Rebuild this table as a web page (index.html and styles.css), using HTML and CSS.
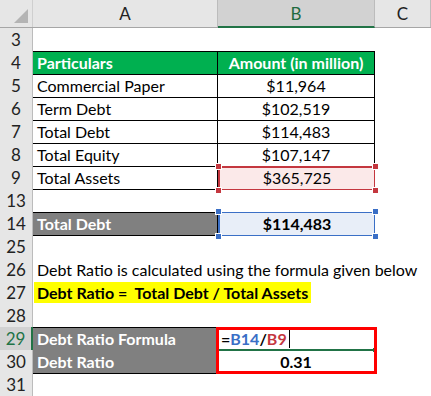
FILE: index.html
```html
<!DOCTYPE html>
<html lang="en">
  <head>
    <meta charset="UTF-8" />
    <title>Debt Ratio</title>
    <link rel="stylesheet" href="styles.css">
  </head>
  <body>
    <div class="sheet">
      <!-- column headers -->
      <div class="row head-row">
        <div class="corner"><span class="corner-tri"></span></div>
        <div class="col-head">A</div>
        <div class="col-head col-active">B</div>
        <div class="col-head">C</div>
      </div>

      <div class="row">
        <div class="num">3</div><div class="cell"></div><div class="cell"></div><div class="cell"></div>
      </div>
      <div class="row tbl tbl-top">
        <div class="num">4</div>
        <div class="cell a green">Particulars</div>
        <div class="cell b green center">Amount (in million)</div>
        <div class="cell c"></div>
      </div>
      <div class="row tbl">
        <div class="num">5</div>
        <div class="cell a">Commercial Paper</div>
        <div class="cell b center">$11,964</div>
        <div class="cell c"></div>
      </div>
      <div class="row tbl">
        <div class="num">6</div>
        <div class="cell a">Term Debt</div>
        <div class="cell b center">$102,519</div>
        <div class="cell c"></div>
      </div>
      <div class="row tbl">
        <div class="num">7</div>
        <div class="cell a">Total Debt</div>
        <div class="cell b center">$114,483</div>
        <div class="cell c"></div>
      </div>
      <div class="row tbl">
        <div class="num">8</div>
        <div class="cell a">Total Equity</div>
        <div class="cell b center">$107,147</div>
        <div class="cell c"></div>
      </div>
      <div class="row tbl">
        <div class="num">9</div>
        <div class="cell a">Total Assets</div>
        <div class="cell b center ref ref-red">
          $365,725
          <span class="h tl"></span><span class="h tr"></span><span class="h bl"></span><span class="h br"></span>
        </div>
        <div class="cell c"></div>
      </div>
      <div class="row">
        <div class="num">13</div><div class="cell"></div><div class="cell"></div><div class="cell"></div>
      </div>
      <div class="row tbl tbl-top">
        <div class="num">14</div>
        <div class="cell a gray">Total Debt</div>
        <div class="cell b center bold ref ref-blue">
          $114,483
          <span class="h tl"></span><span class="h tr"></span><span class="h bl"></span><span class="h br"></span>
        </div>
        <div class="cell c"></div>
      </div>
      <div class="row">
        <div class="num">25</div><div class="cell"></div><div class="cell"></div><div class="cell"></div>
      </div>
      <div class="row">
        <div class="num">26</div>
        <div class="cell span">Debt Ratio is calculated using the formula given below</div>
      </div>
      <div class="row">
        <div class="num">27</div>
        <div class="cell span"><span class="mark">Debt Ratio =&nbsp; Total Debt / Total Assets</span></div>
      </div>
      <div class="row">
        <div class="num">28</div><div class="cell"></div><div class="cell"></div><div class="cell"></div>
      </div>
      <div class="row tbl tbl-top">
        <div class="num num-active">29</div>
        <div class="cell a gray">Debt Ratio Formula</div>
        <div class="cell b edit">=<span class="f-blue">B14</span>/<span class="f-red">B9</span><span class="caret"></span><span class="edit-handle"></span></div>
        <div class="cell c"></div>
      </div>
      <div class="row tbl">
        <div class="num">30</div>
        <div class="cell a gray">Debt Ratio</div>
        <div class="cell b center bold">0.31</div>
        <div class="cell c"></div>
      </div>
      <div class="row">
        <div class="num">31</div><div class="cell"></div><div class="cell"></div><div class="cell"></div>
      </div>

      <div class="result-box"></div>
    </div>
  </body>
</html>
```

FILE: styles.css
```css
* {
  margin: 0;
  padding: 0;
  box-sizing: border-box;
}

body {
  background: #fff;
  font-family: Lato, "Open Sans", sans-serif;
  font-size: 16px;
  color: #000;
}

.sheet {
  position: relative;
  width: 431px;
  height: 396px;
  overflow: hidden;
}

.row {
  display: grid;
  grid-template-columns: 33px 185px 157px 56px;
  height: 23px;
}

/* column header */
.head-row {
  height: 28px;
  background: #e6e6e6;
  border-bottom: 1px solid #a6a6a6;
}

.corner {
  position: relative;
  border-right: 1px solid #cfcfcf;
}

.corner-tri {
  position: absolute;
  right: 4px;
  bottom: 4px;
  width: 0;
  height: 0;
  border-left: 14px solid transparent;
  border-bottom: 14px solid #b4b4b4;
}

.col-head {
  display: flex;
  align-items: center;
  justify-content: center;
  font-size: 17px;
  color: #222;
  border-right: 1px solid #bcbcbc;
}

.col-active {
  background: #d2d2d2;
  color: #1f6b3f;
  border-bottom: 2px solid #217346;
  margin-bottom: -1px;
  height: 28px;
}

/* row numbers */
.num {
  background: #e6e6e6;
  border-bottom: 1px solid #cdcdcd;
  border-right: 1px solid #bcbcbc;
  text-align: center;
  line-height: 23px;
  font-size: 17px;
  color: #222;
}

.num-active {
  background: #d2d2d2;
  color: #217346;
  border-right: 2px solid #217346;
}

.cell {
  position: relative;
  padding: 0 4px;
  line-height: 23px;
  white-space: nowrap;
}

.span {
  grid-column: 2 / 5;
  overflow: visible;
}

.mark {
  background: #ffff00;
  font-weight: bold;
  display: inline-block;
  line-height: 21px;
  margin-left: -3px;
  padding: 0 3px;
}

/* bordered table */
.tbl .a,
.tbl .b {
  border-bottom: 1px solid #000;
  border-right: 1px solid #000;
}

.tbl-top .a,
.tbl-top .b {
  border-top: 1px solid #000;
  line-height: 21px;
}

.center {
  text-align: center;
}

.bold {
  font-weight: bold;
}

.green {
  background: #00b050;
  color: #fff;
  font-weight: bold;
}

.gray {
  background: #808080;
  color: #fff;
  font-weight: bold;
}

/* reference highlight around formula cells */
.ref {
  border: 2px solid;
}

.ref-red {
  border-color: #c4373f !important;
  background: #fbe9e9;
  line-height: 19px;
}

.ref-blue {
  border-color: #3a6fc6 !important;
  background: #e8eef8;
  line-height: 19px;
}

.h {
  position: absolute;
  width: 7px;
  height: 7px;
  border: 1px solid #fff;
}

.ref-red .h {
  background: #c4373f;
}

.ref-blue .h {
  background: #3a6fc6;
}

.tl { left: -5px; top: -5px; }
.tr { right: -5px; top: -5px; }
.bl { left: -5px; bottom: -5px; }
.br { right: -5px; bottom: -5px; }

/* cell being edited */
.edit {
  font-weight: bold;
  padding-left: 3px;
  border-bottom: 2px solid #217346 !important;
}

.f-blue {
  color: #3a6fc6;
}

.f-red {
  color: #c4373f;
}

.caret {
  display: inline-block;
  width: 1px;
  height: 18px;
  background: #000;
  margin-left: 2px;
  vertical-align: -3px;
}

.edit-handle {
  position: absolute;
  right: -3px;
  bottom: -3px;
  width: 4px;
  height: 4px;
  background: #217346;
}

.result-box {
  position: absolute;
  left: 216px;
  top: 327px;
  width: 161px;
  height: 47px;
  border: 3px solid #ff0000;
}
```
